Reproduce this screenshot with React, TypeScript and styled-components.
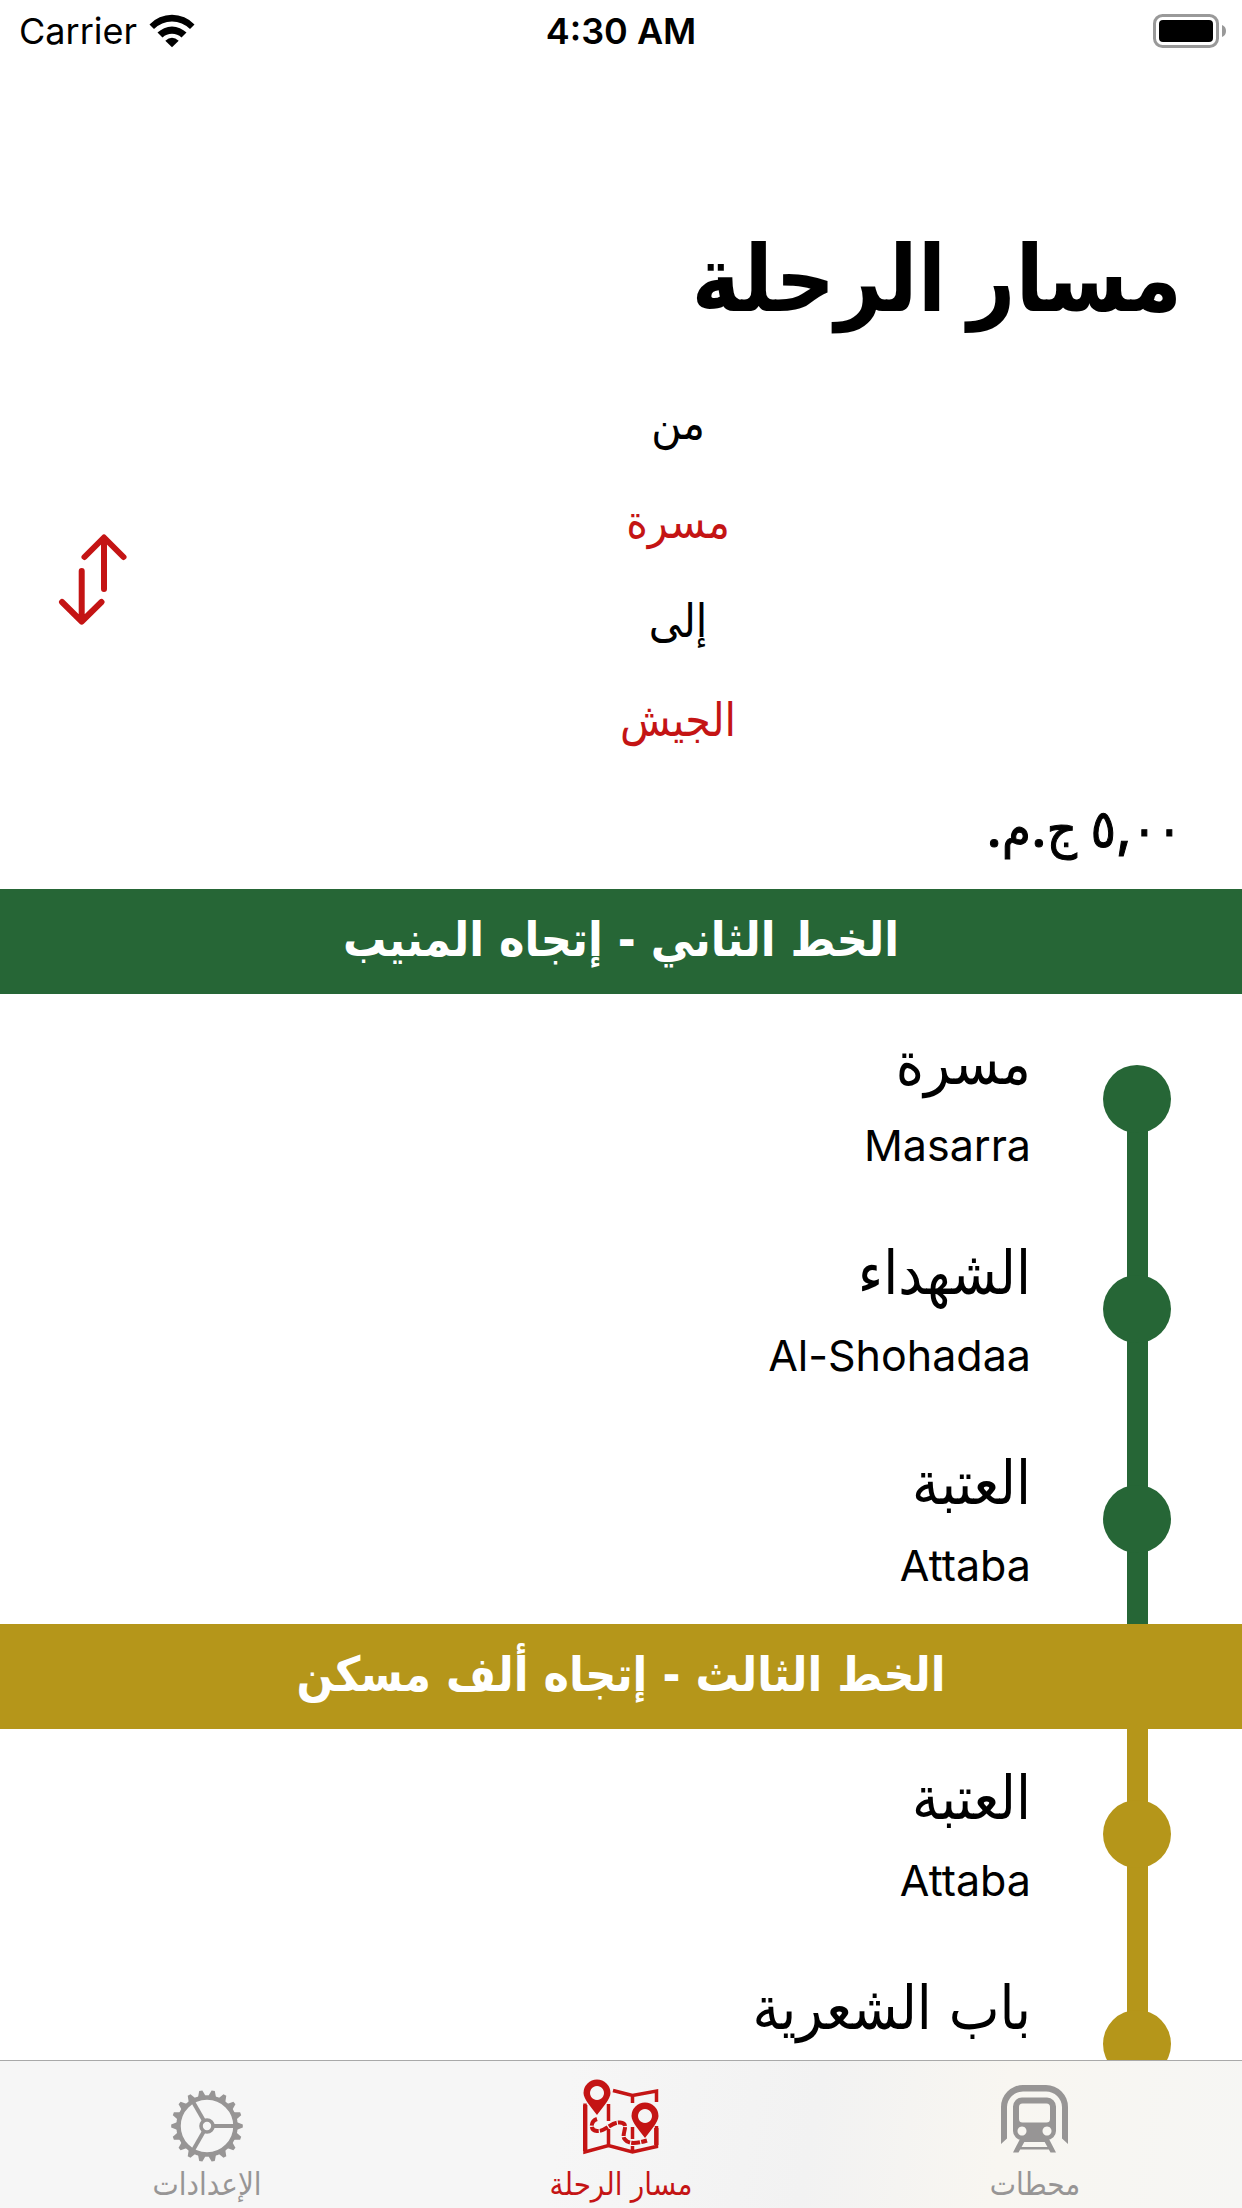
import React from "react";
import styled, { createGlobalStyle } from "styled-components";

const RED = "#c41414";
const GREEN = "#266636";
const GOLD = "#b5961a";
const GREY = "#979595";

const GlobalStyle = createGlobalStyle`
  *, *::before, *::after { box-sizing: border-box; }
  body { margin: 0; background: #fff; color: #000; }
  body, button { font-family: Inter, "DejaVu Sans Condensed", "DejaVu Sans", sans-serif; }
  h1, h2, p, ul { margin: 0; padding: 0; }
`;

const Screen = styled.div`
  display: flex;
  flex-direction: column;
  height: 100vh;
  overflow: hidden;
`;

const StatusBar = styled.header`
  display: grid;
  grid-template-columns: 1fr auto 1fr;
  align-items: center;
  height: 60px;
  flex: none;
  padding: 2px 15px 0;
  font-size: 36px;
  line-height: 44px;
`;

const Carrier = styled.div`
  display: flex;
  align-items: center;
  gap: 12px;
  padding-left: 4px;
`;

const Clock = styled.time`
  font-weight: 600;
`;

const BatteryIcon = styled.svg`
  justify-self: end;
`;

const Content = styled.main`
  flex: 1;
  min-height: 0;
  overflow: hidden;
`;

const Title = styled.h1`
  padding: 155px 60px 0;
  font-size: 92px;
  line-height: 126px;
  font-weight: 700;
`;

const Planner = styled.section`
  display: flex;
  align-items: center;
  gap: 46px;
  padding: 32px 60px 0 58px;
`;

const Endpoints = styled.div`
  flex: 1;
  display: flex;
  flex-direction: column;
  align-items: center;
`;

const Caption = styled.span`
  font-size: 46px;
  line-height: 99px;
`;

const StationButton = styled.button`
  border: 0;
  padding: 0;
  background: none;
  color: ${RED};
  font-size: 46px;
  line-height: 99px;
`;

const SwapButton = styled.button`
  display: flex;
  border: 0;
  padding: 16px 0 0;
  background: none;
`;

const Fare = styled.p`
  padding: 0 60px;
  font-size: 52px;
  line-height: 120px;
  font-weight: 500;
  -webkit-text-stroke: 1px currentColor;
`;

const LineBanner = styled.h2<{ $color: string }>`
  padding-bottom: 4px;
  background: ${(p) => p.$color};
  color: #fff;
  text-align: center;
  font-family: "DejaVu Sans Condensed", "DejaVu Sans", sans-serif;
  font-size: 48px;
  line-height: 101px;
  font-weight: 600;
`;

const Stops = styled.ul`
  list-style: none;
`;

const Stop = styled.li`
  display: flex;
  gap: 72px;
  height: 210px;
  padding: 0 71px;
`;

const Track = styled.div<{ $color: string; $start: boolean }>`
  flex: none;
  width: 68px;
  display: flex;
  align-items: center;
  justify-content: center;
  background: linear-gradient(${(p) => p.$color}, ${(p) => p.$color}) bottom center / 21px
    ${(p) => (p.$start ? "50%" : "100%")} no-repeat;
`;

const Dot = styled.span<{ $color: string }>`
  width: 68px;
  height: 68px;
  border-radius: 50%;
  background: ${(p) => p.$color};
`;

const Names = styled.div`
  padding-top: 28px;
`;

const ArabicName = styled.p`
  font-size: 60px;
  line-height: 80px;
`;

const LatinName = styled.p`
  font-size: 43px;
  line-height: 86px;
`;

const TabBar = styled.nav`
  flex: none;
  display: grid;
  grid-template-columns: repeat(3, 1fr);
  height: 148px;
  border-top: 1px solid #a9a9a9;
  background: linear-gradient(100deg, #f6f6f6 45%, #f2f2f2 65%, #f8f6f1 80%, #f6f6f4);
`;

const Tab = styled.button<{ $active?: boolean }>`
  display: flex;
  flex-direction: column;
  align-items: center;
  justify-content: flex-start;
  border: 0;
  padding: 18px 0 0;
  background: none;
  color: ${(p) => (p.$active ? RED : GREY)};
  font-size: 31px;
  line-height: 42px;
  font-weight: 500;
`;

const WifiIcon = () => (
  <svg width="46" height="34" viewBox="0 0 46 34" aria-hidden="true">
    <path d="M0.500 10.500A31 31 0 0 1 45.500 10.500L41 15A25.500 25.500 0 0 0 5 15z" />
    <path d="M8.500 18.600A20.500 20.500 0 0 1 37.500 18.600L32.500 23.400A14 14 0 0 0 13.500 23.400z" />
    <path d="M16.300 26.700Q23 21 29.700 26.700L23 33.300z" />
  </svg>
);

const Battery = () => (
  <BatteryIcon width="74" height="34" viewBox="0 0 74 34" role="img" aria-label="Battery full">
    <rect x="1.500" y="1.500" width="63" height="31" rx="8" fill="none" stroke="#999" strokeWidth="3" />
    <rect x="6" y="6" width="54" height="22" rx="4" />
    <path d="M69 11q4 1.500 4 6t-4 6z" fill="#999" />
  </BatteryIcon>
);

const SwapIcon = () => (
  <svg width="70" height="92" viewBox="0 0 70 92" fill="none" stroke={RED} strokeWidth="6" strokeLinecap="round" strokeLinejoin="round" aria-hidden="true">
    <path d="M46 56V5M26.500 24L46 4.500 65.500 24" />
    <path d="M23.700 38v49M4 69l19.700 19.500L43.500 69" />
  </svg>
);

const TrainIcon = () => (
  <svg width="74" height="84" viewBox="0 -3 74 84" fill="currentColor" aria-hidden="true">
    <path d="M3 62V25A22 22 0 0 1 25 3H48A22 22 0 0 1 70 25V62L64 56.500V25A16 16 0 0 0 48 9.500H25A16 16 0 0 0 9 25V56.500z" />
    <path fillRule="evenodd" d="M24 15.500H49A9 9 0 0 1 58 24.500V49A9 9 0 0 1 49 58H24A9 9 0 0 1 15 49V24.500A9 9 0 0 1 24 15.500zM24.500 21.500A3.500 3.500 0 0 0 21 25V37A3.500 3.500 0 0 0 24.500 40.500H48.500A3.500 3.500 0 0 0 52 37V25A3.500 3.500 0 0 0 48.500 21.500zM24 44.500a4.500 4.500 0 1 0 .01 0zM49 44.500a4.500 4.500 0 1 0 .01 0z" />
    <path d="M22 57H28L20.500 70.500H15zM45 57H51L58 70.500H52.500zM25 58H48V60H25zM22 65H51V67.500H22z" />
  </svg>
);

const RouteIcon = () => (
  <svg width="76" height="84" viewBox="0 0 76 84" fill="none" stroke="currentColor" strokeWidth="3.500" aria-hidden="true">
    <path d="M2 24.500V73L25.500 66.500 49.500 73 73.500 67.500V47M73.500 23V12L49.500 16.500 30 11.500M25.500 25V42M25.500 50V66M49.500 16V24M49.500 48V60M49.500 67V73" />
    <path d="M2.200 26V72M73.300 49V66" strokeWidth="4.400" />
    <path d="M14 40C8 42 6 51 14 52 22 53 28 43 37 43.500 48 44 37 56 42 60.500 46 66 56 64 64 61.500" strokeWidth="4" strokeDasharray="8.800 1.200" />
    <path fill="currentColor" stroke="none" fillRule="evenodd" d="M14 .5A13.500 13.500 0 0 1 27.500 14C27.500 20 20 28 14 36 8 28 .5 20 .5 14A13.500 13.500 0 0 1 14 .5zM14 7a7 7 0 1 0 .01 0z" />
    <path fill="currentColor" stroke="none" fillRule="evenodd" d="M62 23.500A13.500 13.500 0 0 1 75.500 37C75.500 43 68 51 62 59 56 51 48.500 43 48.500 37A13.500 13.500 0 0 1 62 23.500zM62 30a7 7 0 1 0 .01 0z" />
  </svg>
);

const TEETH = Array.from({ length: 18 }, (_, i) => i * 20);

const GearIcon = () => (
  <svg width="74" height="84" viewBox="-37 -47 74 84" fill="none" stroke="currentColor" strokeWidth="4" aria-hidden="true">
    <circle r="28.500" strokeWidth="4.500" />
    <circle r="6" strokeWidth="3.600" />
    {[0, 120, 240].map((a) => (
      <path key={a} d="M7 0H28" transform={`rotate(${a})`} />
    ))}
    {TEETH.map((a) => (
      <path key={a} d="M29.500-4L35.800-1.600V1.600L29.500 4z" fill="currentColor" stroke="none" transform={`rotate(${a})`} />
    ))}
  </svg>
);

type StopData = { ar: string; en?: string };
type Leg = { title: string; color: string; stops: StopData[] };

const LEGS: Leg[] = [
  {
    title: "الخط الثاني - إتجاه المنيب",
    color: GREEN,
    stops: [
      { ar: "مسرة", en: "Masarra" },
      { ar: "الشهداء", en: "Al-Shohadaa" },
      { ar: "العتبة", en: "Attaba" },
    ],
  },
  {
    title: "الخط الثالث - إتجاه ألف مسكن",
    color: GOLD,
    stops: [
      { ar: "العتبة", en: "Attaba" },
      { ar: "باب الشعرية" },
    ],
  },
];

export default function App() {
  return (
    <Screen>
      <GlobalStyle />
      <StatusBar>
        <Carrier>
          Carrier
          <WifiIcon />
        </Carrier>
        <Clock>4:30 AM</Clock>
        <Battery />
      </StatusBar>
      <Content dir="rtl" lang="ar">
        <Title>مسار الرحلة</Title>
        <Planner>
          <Endpoints>
            <Caption>من</Caption>
            <StationButton type="button">مسرة</StationButton>
            <Caption>إلى</Caption>
            <StationButton type="button">الجيش</StationButton>
          </Endpoints>
          <SwapButton type="button" aria-label="تبديل">
            <SwapIcon />
          </SwapButton>
        </Planner>
        <Fare>٥,٠٠ ج.م.</Fare>
        {LEGS.map((leg, legIndex) => (
          <section key={leg.title}>
            <LineBanner $color={leg.color}>{leg.title}</LineBanner>
            <Stops>
              {leg.stops.map((stop, i) => (
                <Stop key={stop.ar}>
                  <Track $color={leg.color} $start={legIndex === 0 && i === 0}>
                    <Dot $color={leg.color} />
                  </Track>
                  <Names>
                    <ArabicName>{stop.ar}</ArabicName>
                    {stop.en && <LatinName>{stop.en}</LatinName>}
                  </Names>
                </Stop>
              ))}
            </Stops>
          </section>
        ))}
      </Content>
      <TabBar dir="rtl" lang="ar">
        <Tab type="button">
          <TrainIcon />
          محطات
        </Tab>
        <Tab type="button" $active aria-current="page">
          <RouteIcon />
          مسار الرحلة
        </Tab>
        <Tab type="button">
          <GearIcon />
          الإعدادات
        </Tab>
      </TabBar>
    </Screen>
  );
}
